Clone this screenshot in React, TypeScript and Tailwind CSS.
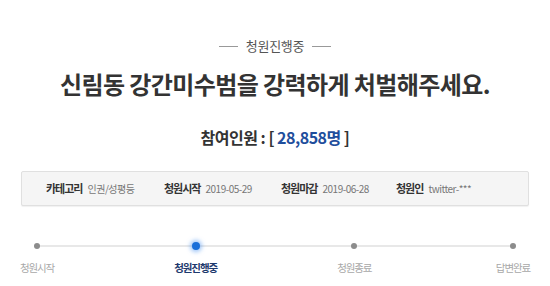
import React from "react";

const font = { fontFamily: '"Noto Sans CJK KR", "Noto Sans", sans-serif' };

function InfoItem({ label, value, w }: { label: string; value: string; w: string }) {
  return (
    <div className={`flex items-center gap-[5px] ${w}`}>
      <span className="text-[11px] font-bold text-[#333] tracking-[-1px]">{label}</span>
      <span className="text-[10px] text-[#777] tracking-[-0.5px]">{value}</span>
    </div>
  );
}

function Step({ label, active }: { label: string; active?: boolean }) {
  return (
    <div className="w-0 flex flex-col items-center">
      <div className="h-[8px] flex items-center justify-center">
        {active ? (
          <div className="w-[8px] h-[8px] rounded-full bg-[#1a6fd9] shadow-[0_0_4px_2px_rgba(80,150,240,0.55)]" />
        ) : (
          <div className="w-[6px] h-[6px] rounded-full bg-[#8c8c8c]" />
        )}
      </div>
      <span
        className={`mt-[10px] whitespace-nowrap text-[10.5px] leading-[16px] tracking-[-1.1px] ${
          active ? "font-bold text-[#1e3a6e]" : "text-[#a8a8a8]"
        }`}
      >
        {label}
      </span>
    </div>
  );
}

export default function App() {
  return (
    <div className="w-[550px] h-[286px] bg-white overflow-hidden" style={font}>
      <div className="pt-[37px] flex flex-col items-center">
        <div className="flex items-center gap-[8px] h-[18px]">
          <div className="w-[19px] h-px bg-[#999]" />
          <span className="text-[13px] leading-[18px] text-[#555] tracking-[-0.3px]">청원진행중</span>
          <div className="w-[19px] h-px bg-[#999]" />
        </div>
        <h1 className="mt-[14px] text-[24px] leading-[30px] font-bold text-[#333] tracking-[-0.6px]">
          신림동 강간미수범을 강력하게 처벌해주세요.
        </h1>
        <div className="mt-[27px] text-[16px] leading-[22px] font-bold text-[#333] tracking-[-0.5px]">
          참여인원 : [ <span className="text-[#1f4e9c]">28,858명</span> ]
        </div>
      </div>
      <div className="mx-[21px] mt-[23px] h-[35px] rounded-[2px] border border-[#e0e0e0] bg-[#f5f5f5] shadow-[0_1px_1px_rgba(0,0,0,0.06)] flex items-center pl-[24px]">
        <InfoItem label="카테고리" value="인권/성평등" w="w-[118px]" />
        <InfoItem label="청원시작" value="2019-05-29" w="w-[117px]" />
        <InfoItem label="청원마감" value="2019-06-28" w="w-[115px]" />
        <InfoItem label="청원인" value="twitter-***" w="w-[110px]" />
      </div>
      <div className="relative mx-[37px] mt-[36px]">
        <div className="absolute left-0 right-0 top-[3px] h-[2px] bg-[#e8e8e8]" />
        <div className="relative flex justify-between">
          <Step label="청원시작" />
          <Step label="청원진행중" active />
          <Step label="청원종료" />
          <Step label="답변완료" />
        </div>
      </div>
    </div>
  );
}
